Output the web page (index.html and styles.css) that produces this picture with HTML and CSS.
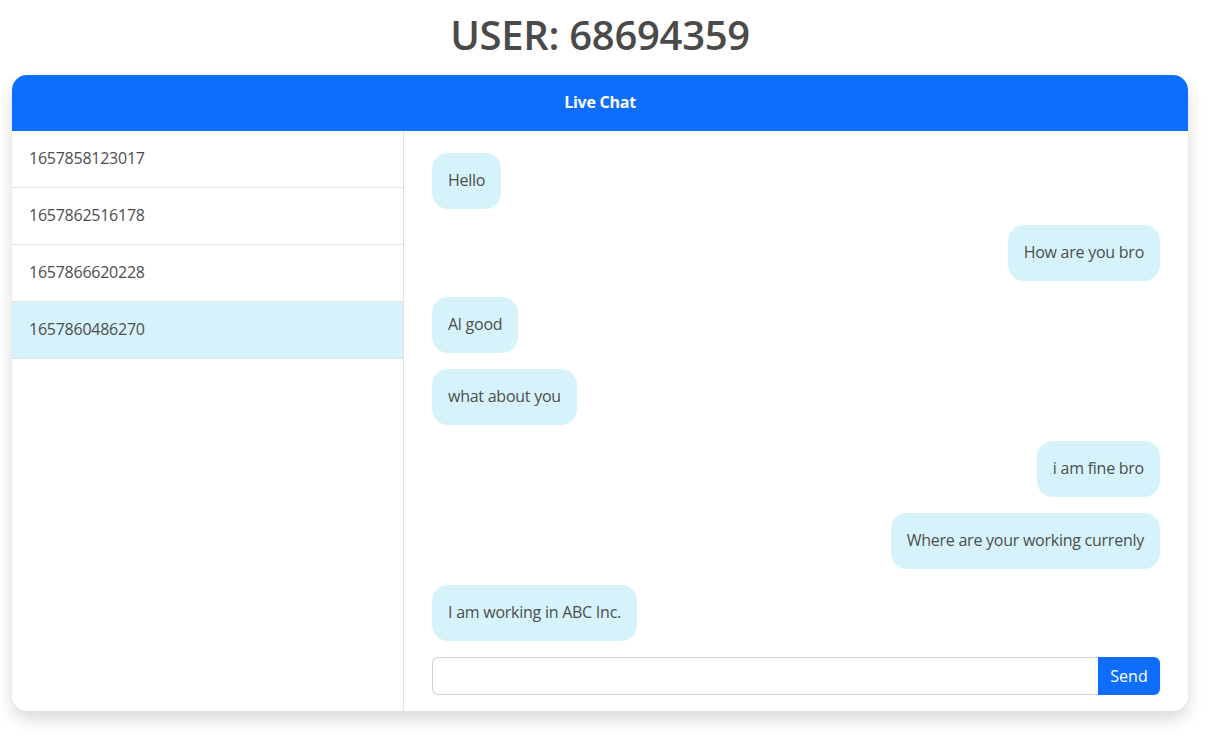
FILE: index.html
```html
<!DOCTYPE html>
<html>
<head>
<meta charset="utf-8">
<link rel="stylesheet" href="styles.css">
</head>
<body>
<div class="page">
  <h1 class="title">USER: 68694359</h1>
  <div class="card">
    <div class="card-header">Live Chat</div>
    <div class="card-body">
      <ul class="rooms">
        <li class="room">1657858123017</li>
        <li class="room">1657862516178</li>
        <li class="room">1657866620228</li>
        <li class="room active">1657860486270</li>
      </ul>
      <div class="chat">
        <div class="messages">
          <div class="msg left">Hello</div>
          <div class="msg right">How are you bro</div>
          <div class="msg left">Al good</div>
          <div class="msg left">what about you</div>
          <div class="msg right">i am fine bro</div>
          <div class="msg right">Where are your working currenly</div>
          <div class="msg left">I am working in ABC Inc.</div>
        </div>
        <form class="composer">
          <input class="composer-input" type="text">
          <button class="composer-send" type="button">Send</button>
        </form>
      </div>
    </div>
  </div>
</div>
</body>
</html>
```

FILE: styles.css
```css
* { box-sizing: border-box; }
html, body { margin: 0; padding: 0; background: #fff; }
body {
  font-family: "Open Sans", "Noto Sans", sans-serif;
  font-size: 16px;
  line-height: 24px;
  letter-spacing: -0.25px;
  color: #4d4d4d;
}
.page {
  width: 1200px;
  padding: 11px 12px 30px 12px;
}
.title {
  margin: 0 0 16px;
  font-size: 40px;
  line-height: 48px;
  font-weight: 600;
  letter-spacing: -0.3px;
  text-align: center;
  color: #4a4a4a;
}
.card {
  height: 636px;
  border-radius: 15px;
  background: #fff;
  box-shadow: 0 8px 16px rgba(0,0,0,0.15);
  display: flex;
  flex-direction: column;
  overflow: hidden;
}
.card-header {
  height: 56px;
  flex: none;
  background: #0d6efd;
  color: #fff;
  font-weight: 700;
  padding-bottom: 2px;
  display: flex;
  align-items: center;
  justify-content: center;
}
.card-body {
  flex: 1;
  display: flex;
  min-height: 0;
}
.rooms {
  list-style: none;
  margin: 0;
  padding: 0;
  width: 392px;
  flex: none;
  border-right: 1px solid #dee2e6;
}
.room {
  height: 57px;
  padding: 15px 17px 17px;
  border-bottom: 1px solid #dee2e6;
}
.room.active { background: #d6f3fb; }
.chat {
  flex: 1;
  display: flex;
  flex-direction: column;
  padding: 22px 28px 16px;
}
.messages {
  flex: 1;
  display: flex;
  flex-direction: column;
  gap: 16px;
}
.msg {
  padding: 15px 16px 17px;
  border-radius: 16px;
  background: #d6f3fb;
  max-width: 70%;
}
.msg.left { align-self: flex-start; }
.msg.right { align-self: flex-end; }
.composer {
  margin: 16px 0 0;
  display: flex;
  height: 38px;
}
.composer-input {
  flex: 1;
  border: 1px solid #ced4da;
  border-right: none;
  border-radius: 6px 0 0 6px;
  font: inherit;
  padding: 6px 12px;
  outline: none;
}
.composer-send {
  width: 62px;
  border: none;
  background: #0d6efd;
  color: #fff;
  font: inherit;
  border-radius: 0 6px 6px 0;
  padding: 6px 12px;
}
```
